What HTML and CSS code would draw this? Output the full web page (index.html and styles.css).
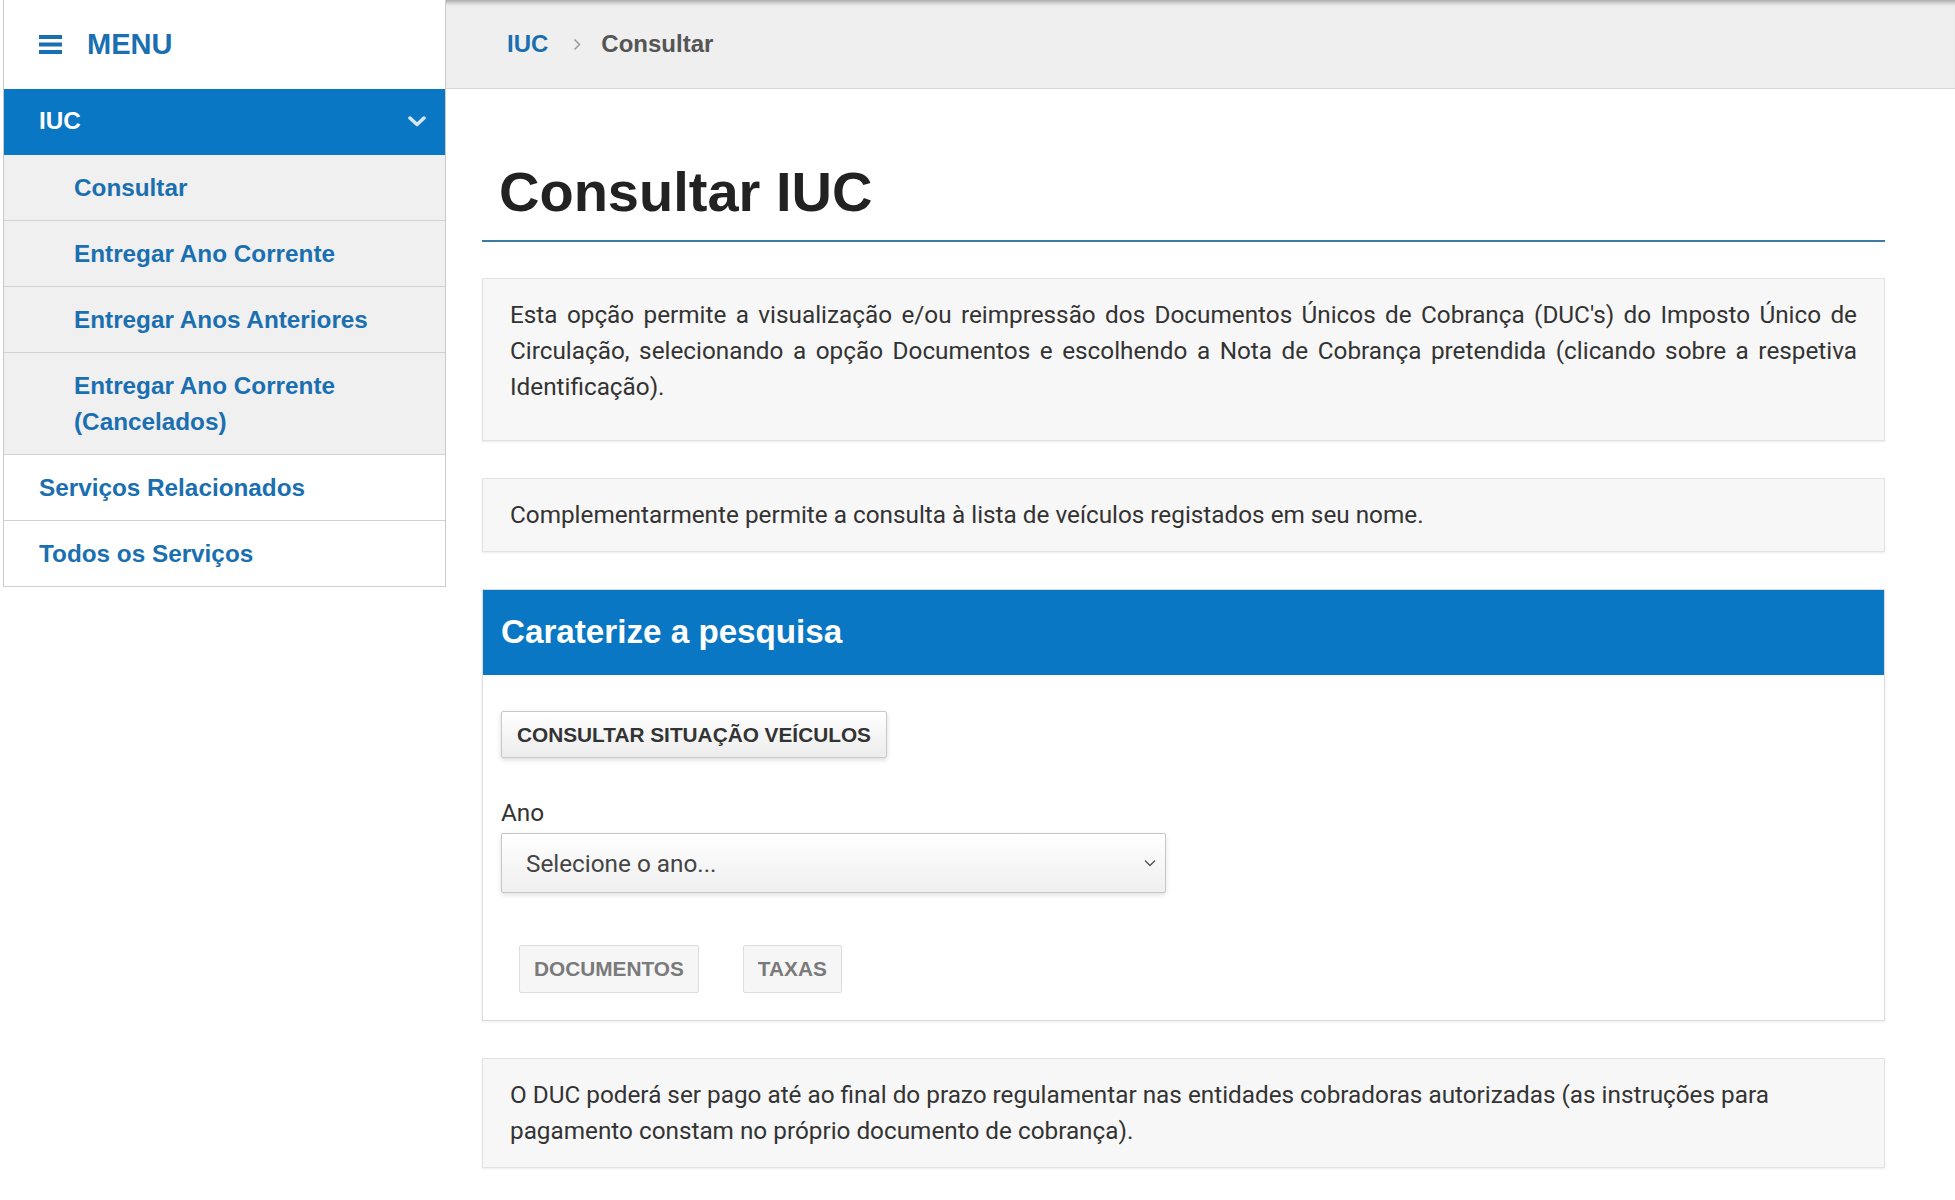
FILE: index.html
```html
<!DOCTYPE html>
<html lang="pt">
	<head>
		<meta charset="UTF-8" />
		<meta name="viewport" content="width=device-width, initial-scale=1.0" />
		<title>Consultar IUC</title>
		<link rel="stylesheet" href="styles.css">
	</head>
	<body>
		<div class="page">
			<nav class="sidebar">
				<div class="menu-head">
					<svg class="burger" width="23" height="19" viewBox="0 0 23 19">
						<rect x="0" y="0" width="23" height="4" />
						<rect x="0" y="7.5" width="23" height="4" />
						<rect x="0" y="15" width="23" height="4" />
					</svg>
					<span>MENU</span>
				</div>
				<ul class="nav">
					<li class="nav-group">
						<a href="#">IUC</a>
						<svg width="18" height="11" viewBox="0 0 18 11"><polyline points="2,2 9,8.5 16,2" /></svg>
					</li>
					<li class="nav-sub"><a href="#">Consultar</a></li>
					<li class="nav-sub"><a href="#">Entregar Ano Corrente</a></li>
					<li class="nav-sub"><a href="#">Entregar Anos Anteriores</a></li>
					<li class="nav-sub"><a href="#">Entregar Ano Corrente (Cancelados)</a></li>
					<li class="nav-item"><a href="#">Serviços Relacionados</a></li>
					<li class="nav-item"><a href="#">Todos os Serviços</a></li>
				</ul>
			</nav>

			<main class="main">
				<div class="crumbs">
					<a href="#">IUC</a>
					<svg class="crumb-sep" width="8" height="13" viewBox="0 0 8 13"><polyline points="1.5,1.5 6.5,6.5 1.5,11.5" /></svg>
					<span>Consultar</span>
				</div>

				<div class="content">
					<h1 class="page-title">Consultar IUC</h1>

					<div class="info-box tall justify">
						<p>Esta opção permite a visualização e/ou reimpressão dos Documentos Únicos de Cobrança (DUC's) do Imposto Único de Circulação, selecionando a opção Documentos e escolhendo a Nota de Cobrança pretendida (clicando sobre a respetiva Identificação).</p>
					</div>

					<div class="info-box">
						<p>Complementarmente permite a consulta à lista de veículos registados em seu nome.</p>
					</div>

					<section class="panel">
						<h2 class="panel-head">Caraterize a pesquisa</h2>
						<div class="panel-body">
							<button class="btn">CONSULTAR SITUAÇÃO VEÍCULOS</button>
							<label class="field-label">Ano</label>
							<div class="select">
								<span>Selecione o ano...</span>
								<svg width="12" height="8" viewBox="0 0 12 8"><polyline points="1,1.5 6,6.5 11,1.5" /></svg>
							</div>
							<div class="actions">
								<button class="btn btn-off">DOCUMENTOS</button>
								<button class="btn btn-off">TAXAS</button>
							</div>
						</div>
					</section>

					<div class="info-box">
						<p>O DUC poderá ser pago até ao final do prazo regulamentar nas entidades cobradoras autorizadas (as instruções para pagamento constam no próprio documento de cobrança).</p>
					</div>
				</div>
			</main>
		</div>
	</body>
</html>
```

FILE: styles.css
```css
body {
	margin: 0;
	background-color: #fff;
	font-family: Roboto, "Liberation Sans", sans-serif;
	color: #333;
}
a {
	text-decoration: none;
	color: inherit;
}
.page {
	display: flex;
	align-items: flex-start;
}

/* sidebar */
.sidebar {
	flex-shrink: 0;
	width: 443px;
	box-sizing: border-box;
	margin-left: 3px;
	border-left: 1px solid #cbcbcb;
	border-right: 1px solid #cbcbcb;
	font-family: "Liberation Sans", Arial, sans-serif;
	font-weight: bold;
	color: #1a6fb0;
}
.menu-head {
	height: 89px;
	display: flex;
	align-items: center;
	gap: 25px;
	padding-left: 35px;
	font-size: 29px;
	background-color: #fff;
}
.burger rect {
	fill: #1a6fb0;
}
.nav {
	list-style: none;
	margin: 0;
	padding: 0;
	font-size: 24.3px;
	line-height: 36px;
}
.nav-group {
	display: flex;
	justify-content: space-between;
	align-items: center;
	padding: 14px 19px 16px 35px;
	background-color: #0a77c4;
	color: #fff;
}
.nav-group polyline {
	fill: none;
	stroke: #d6e6f3;
	stroke-width: 3.5;
	stroke-linecap: round;
	stroke-linejoin: round;
}
.nav-sub {
	padding: 15px 40px 14px 70px;
	background-color: #f0f0f0;
	border-bottom: 1px solid #d2d2d2;
}
.nav-item {
	padding: 15px 20px 14px 35px;
	background-color: #fff;
	border-bottom: 1px solid #d2d2d2;
}

/* main column */
.main {
	flex: 1;
	min-width: 0;
}
.crumbs {
	height: 88px;
	display: flex;
	align-items: center;
	padding-left: 61px;
	background-color: #efefef;
	border-bottom: 1px solid #d6d6d6;
	box-shadow: inset 0 6px 5px -4px rgba(0, 0, 0, 0.35);
	font-family: "Liberation Sans", Arial, sans-serif;
	font-weight: bold;
	font-size: 24px;
	color: #555;
}
.crumbs a {
	color: #1a6fb0;
}
.crumb-sep {
	margin: 0 20px 0 25px;
}
.crumb-sep polyline {
	fill: none;
	stroke: #9a9a9a;
	stroke-width: 1.5;
}
.content {
	padding: 70px 70px 40px 36px;
}
.page-title {
	margin: 0;
	padding: 0 0 16px 17px;
	font-family: "Liberation Sans", Arial, sans-serif;
	font-size: 56px;
	line-height: 65px;
	color: #222;
	border-bottom: 2px solid #3f7aa3;
}
.info-box {
	margin-top: 37px;
	padding: 18px 27px 18px;
	background-color: #f7f7f7;
	border: 1px solid #e2e2e2;
	box-shadow: 0 1px 2px rgba(0, 0, 0, 0.08);
}
.page-title + .info-box {
	margin-top: 36px;
}
.info-box p {
	margin: 0;
	font-size: 24.3px;
	line-height: 36px;
	color: #333;
}
.info-box.tall {
	padding-bottom: 35px;
}
.justify p {
	text-align: justify;
}

/* search panel */
.panel {
	margin-top: 37px;
	border: 1px solid #dcdcdc;
	box-shadow: 0 1px 3px rgba(0, 0, 0, 0.08);
}
.panel-head {
	margin: 0;
	padding: 22px 18px 23px;
	background-color: #0a77c4;
	color: #fff;
	font-family: "Liberation Sans", Arial, sans-serif;
	font-size: 33.2px;
	line-height: 40px;
}
.panel-body {
	padding: 36px 18px 27px;
}
.btn {
	display: block;
	height: 47px;
	padding: 0 15px;
	font-family: "Liberation Sans", Arial, sans-serif;
	font-weight: bold;
	font-size: 20.8px;
	color: #333;
	background: linear-gradient(#ffffff, #ececec);
	border: 1px solid #c9c9c9;
	border-radius: 2px;
	box-shadow: 0 2px 5px rgba(0, 0, 0, 0.15);
}
.field-label {
	display: block;
	margin-top: 37px;
	font-size: 24.3px;
	line-height: 36px;
	color: #333;
}
.select {
	width: 665px;
	height: 60px;
	box-sizing: border-box;
	margin-top: 2px;
	display: flex;
	justify-content: space-between;
	align-items: center;
	padding: 0 9px 0 24px;
	font-size: 24.3px;
	color: #444;
	background: linear-gradient(#ffffff, #efefef);
	border: 1px solid #c6c6c6;
	border-radius: 2px;
	box-shadow: 0 2px 5px rgba(0, 0, 0, 0.12);
}
.select polyline {
	fill: none;
	stroke: #555;
	stroke-width: 1.4;
}
.actions {
	display: flex;
	gap: 44px;
	margin-top: 52px;
	padding-left: 18px;
}
.btn-off {
	height: 48px;
	padding: 0 14px;
	color: #7a7a7a;
	background: #f6f6f6;
	border: 1px solid #dcdcdc;
	box-shadow: none;
}
```
